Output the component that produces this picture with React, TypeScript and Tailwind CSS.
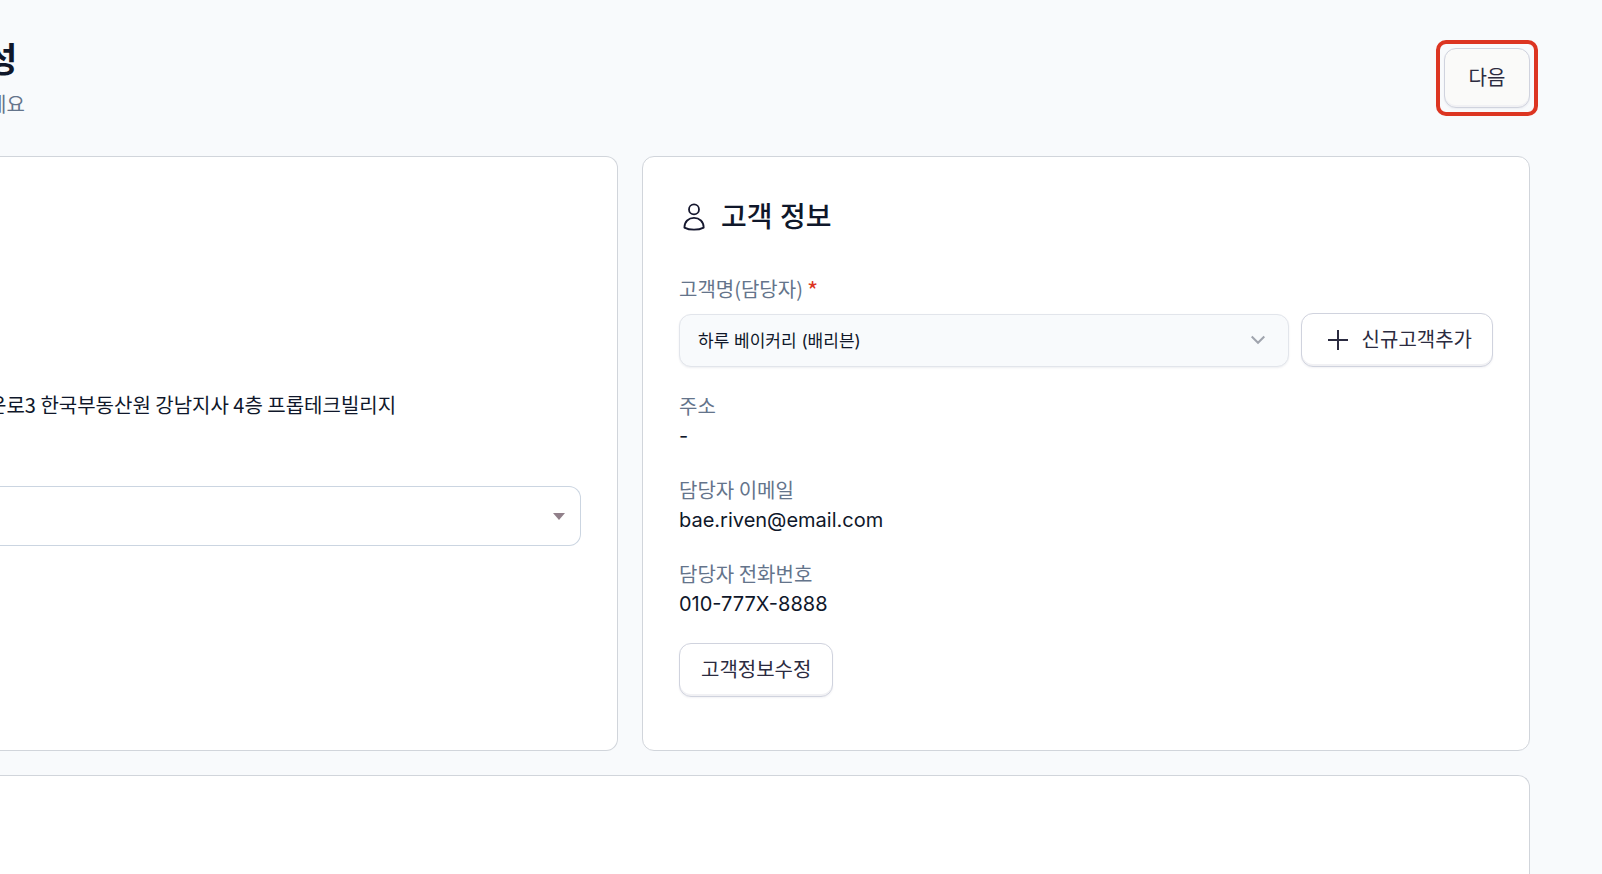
import type { ReactNode } from "react";

const buttonBase =
  "border border-[#d0d3de] text-xl leading-[30px] text-[#2b2b40] rounded-xl shadow-[inset_0_-2px_0_#f1f1f4,0_1px_2px_rgba(30,40,80,0.06)]";

function UserIcon() {
  return (
    <svg width="30" height="30" viewBox="0 0 30 30" fill="none" stroke="#15172e" strokeWidth="1.8" aria-hidden="true">
      <circle cx="15" cy="7.4" r="5" />
      <path
        d="M5.4 25.6C5.4 19.6 9.6 15.9 15 15.9S24.7 19.6 24.7 25.6C22 27 18.500 27.700 15 27.700S8 27 5.400 25.600Z"
        strokeLinejoin="round"
      />
    </svg>
  );
}

function Field({ label, children }: { label: string; children: ReactNode }) {
  return (
    <div className="mt-6">
      <dt className="font-['Noto_Sans_CJK_KR',sans-serif] text-[#64748b]">{label}</dt>
      <dd className="text-[#0f172a]">{children}</dd>
    </div>
  );
}

export default function App() {
  return (
    <div className="flex h-screen flex-col overflow-hidden bg-[#f8fafc] font-['Inter','Noto_Sans_CJK_KR',sans-serif] text-xl leading-[30px]">
      <header className="flex items-start justify-between pt-10 pr-16 pb-9">
        <div className="-ml-3">
          <h1 className="-ml-0.5 text-[34px] leading-10 font-bold text-[#0f172a]">성</h1>
          <p className="mt-2.5 text-[#64748b]">세요</p>
        </div>
        <div className="rounded-[10px] border-4 border-[#dc3522] p-1">
          <button type="button" className={`${buttonBase} h-[60px] w-[86px] bg-[#fafaf9]`}>
            다음
          </button>
        </div>
      </header>

      <main className="flex flex-1 flex-col gap-6 pr-[72px]">
        <div className="grid grid-cols-[618fr_888fr] gap-6">
          <section className="rounded-r-xl border border-l-0 border-[#d1d5db] bg-white pt-[233px] pr-9">
            <p className="-ml-3 font-['Noto_Sans_CJK_KR',sans-serif] whitespace-nowrap text-[#0f172a]">
              운로3 한국부동산원 강남지사 4층 프롭테크빌리지
            </p>
            <div className="relative mt-[66px]">
              <select
                aria-label="선택"
                className="block h-[60px] w-full appearance-none rounded-r-xl border border-l-0 border-[#cbd5e1] bg-white"
              >
                <option value="" />
              </select>
              <svg
                className="pointer-events-none absolute top-[27px] right-4"
                width="12"
                height="7"
                viewBox="0 0 12 7"
                aria-hidden="true"
              >
                <path d="M0 0H12L6 7Z" fill="#91808a" />
              </svg>
            </div>
          </section>

          <section className="rounded-xl border border-[#d1d5db] bg-white px-9 pt-9 pb-[53px]">
            <h2 className="flex h-12 items-center gap-3 text-[28px] font-medium text-[#0f172a]">
              <UserIcon />
              고객 정보
            </h2>
            <label
              htmlFor="customer"
              className="mt-[33px] flex h-[30px] gap-1 font-['Noto_Sans_CJK_KR',sans-serif] text-[#64748b]"
            >
              고객명(담당자)
              <span className="text-2xl text-[#dc3522]">*</span>
            </label>
            <div className="mt-[9px] flex items-end gap-3">
              <div className="relative flex-1">
                <select
                  id="customer"
                  className="block h-[53px] w-full appearance-none rounded-xl border border-[#e2e5eb] bg-[#f8fafc] px-[18px] text-[17px] text-[#0f172a] shadow-[0_1px_2px_rgba(30,40,80,0.08)]"
                >
                  <option>하루 베이커리 (배리븐)</option>
                </select>
                <svg
                  className="pointer-events-none absolute top-5 right-6"
                  width="14"
                  height="12"
                  viewBox="0 0 14 12"
                  fill="none"
                  stroke="#a0a4ae"
                  strokeWidth="2"
                  aria-hidden="true"
                >
                  <path d="M0.700 2.500L7 8.800L13.300 2.500" />
                </svg>
              </div>
              <button type="button" className={`${buttonBase} flex h-[54px] items-center gap-3 bg-white pr-5 pl-6`}>
                <svg width="24" height="24" viewBox="0 0 24 24" stroke="#2b2b40" strokeWidth="2" aria-hidden="true">
                  <path d="M12 2V22M2 12H22" />
                </svg>
                신규고객추가
              </button>
            </div>
            <dl>
              <Field label="주소">-</Field>
              <Field label="담당자 이메일">bae.riven@email.com</Field>
              <Field label="담당자 전화번호">010-777X-8888</Field>
            </dl>
            <button type="button" className={`${buttonBase} mt-6 h-[54px] bg-white px-[21px]`}>
              고객정보수정
            </button>
          </section>
        </div>
        <section className="flex-1 rounded-tr-xl border-t border-r border-[#d1d5db] bg-white" />
      </main>
    </div>
  );
}
